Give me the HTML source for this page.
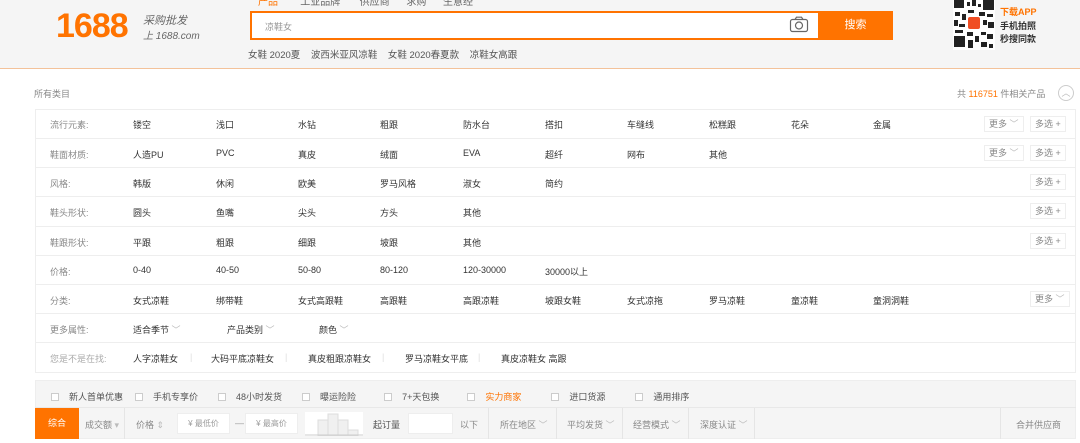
<!DOCTYPE html>
<html><head><meta charset="utf-8"><style>
*{margin:0;padding:0;box-sizing:border-box}
body{width:1080px;height:443px;overflow:hidden;background:#fff;font-family:"Liberation Sans","Noto Sans CJK SC",sans-serif;font-size:9px;color:#333;position:relative}
.a{position:absolute;white-space:nowrap}
.hdr{position:absolute;left:0;top:0;width:1080px;height:69px;background:#f5f5f5;border-bottom:1px solid #f3c29a}
.row{position:absolute;left:35px;width:1040px;height:29px;border-top:1px solid #eee}
.row span{position:absolute;top:9px}
.lab{color:#888}
.btn{position:absolute;height:16px;border:1px solid #eee;background:#fff;color:#888;font-size:9px;line-height:14px;padding:0 4px}
.gray{color:#888}
.cb{display:inline-block;width:8px;height:8px;border:1px solid #ccc;background:#fff;vertical-align:-1px;margin-right:10px}
</style></head><body>
<div class="hdr"></div>
<div class="a" style="left:56px;top:7px;font-size:34px;font-weight:bold;color:#ff7300;letter-spacing:-1px">1688</div>
<div class="a" style="left:143px;top:12px;font-size:11px;color:#666;font-style:italic">采购批发</div>
<div class="a" style="left:143px;top:27px;font-size:10px;color:#666;font-style:italic">上 1688.com</div>
<div class="a" style="left:258px;top:-7px;font-size:10px;color:#666"><span style="color:#ff7300">产品</span>&nbsp;&nbsp;&nbsp;&nbsp;&nbsp;&nbsp;&nbsp;&nbsp;工业品牌&nbsp;&nbsp;&nbsp;&nbsp;&nbsp;&nbsp;&nbsp;供应商&nbsp;&nbsp;&nbsp;&nbsp;&nbsp;&nbsp;求购&nbsp;&nbsp;&nbsp;&nbsp;&nbsp;&nbsp;生意经</div>
<div class="a" style="left:250px;top:11px;width:570px;height:29px;border:2px solid #ff7300;border-right:none;background:#fff"></div>
<div class="a" style="left:265px;top:20px;color:#999">凉鞋女</div>
<svg class="a" style="left:789px;top:16px" width="20" height="17" viewBox="0 0 20 17"><rect x="1.5" y="3.5" width="17" height="12" rx="2" fill="none" stroke="#666" stroke-width="1.2"/><path d="M6 3.5 L7.5 1.2 H12.5 L14 3.5" fill="none" stroke="#666" stroke-width="1.2"/><circle cx="10" cy="9.5" r="3.5" fill="none" stroke="#666" stroke-width="1.2"/></svg>
<div class="a" style="left:818px;top:11px;width:75px;height:29px;background:#ff7300;color:#fff;font-size:11px;text-align:center;line-height:29px">搜索</div>
<div class="a" style="left:248px;top:47px;font-size:9.5px;color:#555;word-spacing:0">女鞋 2020夏&nbsp;&nbsp;&nbsp;&nbsp;波西米亚风凉鞋&nbsp;&nbsp;&nbsp;&nbsp;女鞋 2020春夏款&nbsp;&nbsp;&nbsp;&nbsp;凉鞋女高跟</div>
<svg class="a" style="left:953px;top:0" width="42" height="50" viewBox="0 0 42 50"><rect width="42" height="50" fill="#fff"/><g fill="#222"><rect x="1" y="36" width="11" height="11"/><rect x="30" y="0" width="11" height="10"/><rect x="1" y="0" width="10" height="8"/>
<rect x="14" y="2" width="3" height="4"/><rect x="19" y="0" width="4" height="6"/><rect x="25" y="4" width="3" height="3"/><rect x="2" y="12" width="5" height="4"/><rect x="9" y="14" width="4" height="6"/><rect x="15" y="10" width="6" height="3"/><rect x="26" y="12" width="6" height="4"/><rect x="34" y="14" width="6" height="3"/><rect x="1" y="20" width="4" height="6"/><rect x="6" y="24" width="6" height="3"/><rect x="30" y="20" width="4" height="5"/><rect x="35" y="22" width="6" height="6"/><rect x="2" y="30" width="8" height="3"/><rect x="14" y="32" width="6" height="4"/><rect x="22" y="36" width="4" height="6"/><rect x="28" y="32" width="5" height="3"/><rect x="34" y="34" width="6" height="5"/><rect x="15" y="40" width="5" height="8"/><rect x="28" y="42" width="6" height="5"/><rect x="36" y="44" width="4" height="4"/></g><rect x="15" y="17" width="12" height="12" rx="2" fill="#f04e23"/></svg>
<div class="a" style="left:1000px;top:5px;font-size:9px;color:#ff7300;font-weight:bold">下载APP</div>
<div class="a" style="left:1000px;top:19px;font-size:9px;color:#333;font-weight:bold">手机拍照</div>
<div class="a" style="left:1000px;top:32px;font-size:9px;color:#333;font-weight:bold">秒搜同款</div>

<div class="a gray" style="left:34px;top:87px">所有类目</div>
<div class="a gray" style="left:957px;top:87px">共 <span style="color:#ff7300">116751</span> 件相关产品</div>
<div class="a" style="left:1058px;top:85px;width:16px;height:16px;border:1px solid #ccc;border-radius:50%;color:#bbb;font-size:9px;text-align:center;line-height:15px">︿</div>

<div class="a" style="left:35px;top:109px;width:1041px;height:264px;border:1px solid #eee"></div>
<div class="row" style="top:109px;border-top:none"><span class="lab" style="left:15px">流行元素:</span><span style="left:98px">镂空</span><span style="left:181px">浅口</span><span style="left:263px">水钻</span><span style="left:345px">粗跟</span><span style="left:428px">防水台</span><span style="left:510px">搭扣</span><span style="left:592px">车缝线</span><span style="left:674px">松糕跟</span><span style="left:756px">花朵</span><span style="left:838px">金属</span></div>
<div class="row" style="top:138px"><span class="lab" style="left:15px">鞋面材质:</span><span style="left:98px">人造PU</span><span style="left:181px">PVC</span><span style="left:263px">真皮</span><span style="left:345px">绒面</span><span style="left:428px">EVA</span><span style="left:510px">超纤</span><span style="left:592px">网布</span><span style="left:674px">其他</span></div>
<div class="row" style="top:167px"><span class="lab" style="left:15px">风格:</span><span style="left:98px">韩版</span><span style="left:181px">休闲</span><span style="left:263px">欧美</span><span style="left:345px">罗马风格</span><span style="left:428px">淑女</span><span style="left:510px">简约</span></div>
<div class="row" style="top:196px"><span class="lab" style="left:15px">鞋头形状:</span><span style="left:98px">圆头</span><span style="left:181px">鱼嘴</span><span style="left:263px">尖头</span><span style="left:345px">方头</span><span style="left:428px">其他</span></div>
<div class="row" style="top:226px"><span class="lab" style="left:15px">鞋跟形状:</span><span style="left:98px">平跟</span><span style="left:181px">粗跟</span><span style="left:263px">细跟</span><span style="left:345px">坡跟</span><span style="left:428px">其他</span></div>
<div class="row" style="top:255px"><span class="lab" style="left:15px">价格:</span><span style="left:98px">0-40</span><span style="left:181px">40-50</span><span style="left:263px">50-80</span><span style="left:345px">80-120</span><span style="left:428px">120-30000</span><span style="left:510px">30000以上</span></div>
<div class="row" style="top:284px"><span class="lab" style="left:15px">分类:</span><span style="left:98px">女式凉鞋</span><span style="left:181px">绑带鞋</span><span style="left:263px">女式高跟鞋</span><span style="left:345px">高跟鞋</span><span style="left:428px">高跟凉鞋</span><span style="left:510px">坡跟女鞋</span><span style="left:592px">女式凉拖</span><span style="left:674px">罗马凉鞋</span><span style="left:756px">童凉鞋</span><span style="left:838px">童洞洞鞋</span></div>
<div class="row" style="top:313px"><span class="lab" style="left:15px">更多属性:</span><span style="left:98px">适合季节 <span style="color:#bbb;position:static">﹀</span></span><span style="left:192px">产品类别 <span style="color:#bbb;position:static">﹀</span></span><span style="left:284px">颜色 <span style="color:#bbb;position:static">﹀</span></span></div>
<div class="row" style="top:342px"><span class="lab" style="left:15px;color:#aaa">您是不是在找:</span><span style="left:98px">人字凉鞋女</span><span style="left:176px">大码平底凉鞋女</span><span style="left:273px">真皮粗跟凉鞋女</span><span style="left:370px">罗马凉鞋女平底</span><span style="left:466px">真皮凉鞋女 高跟</span><span style="left:155px;color:#ddd">|</span><span style="left:250px;color:#ddd">|</span><span style="left:347px;color:#ddd">|</span><span style="left:443px;color:#ddd">|</span></div>

<div class="btn" style="left:984px;top:116px">更多 <span style="color:#bbb">﹀</span></div><div class="btn" style="left:1030px;top:116px">多选 +</div>
<div class="btn" style="left:984px;top:145px">更多 <span style="color:#bbb">﹀</span></div><div class="btn" style="left:1030px;top:145px">多选 +</div>
<div class="btn" style="left:1030px;top:174px">多选 +</div>
<div class="btn" style="left:1030px;top:203px">多选 +</div>
<div class="btn" style="left:1030px;top:233px">多选 +</div>
<div class="btn" style="left:1030px;top:291px">更多 <span style="color:#bbb">﹀</span></div>

<div class="a" style="left:35px;top:380px;width:1041px;height:59px;background:#f5f5f5;border:1px solid #eee"></div>
<div class="a" style="left:35px;top:407px;width:1041px;height:1px;background:#e8e8e8"></div>
<div class="a" style="left:51px;top:390px;color:#555"><span class="cb"></span>新人首单优惠<span style="display:inline-block;width:12px"></span><span class="cb"></span>手机专享价<span style="display:inline-block;width:20px"></span><span class="cb"></span>48小时发货<span style="display:inline-block;width:20px"></span><span class="cb"></span>曝运险险<span style="display:inline-block;width:28px"></span><span class="cb"></span>7+天包换<span style="display:inline-block;width:28px"></span><span class="cb"></span><span style="color:#ff7300">实力商家</span><span style="display:inline-block;width:30px"></span><span class="cb"></span>进口货源<span style="display:inline-block;width:30px"></span><span class="cb"></span>通用排序</div>
<div class="a" style="left:35px;top:408px;width:44px;height:31px;background:#ff7300;color:#fff;text-align:center;line-height:31px">综合</div>
<div class="a gray" style="left:85px;top:418px">成交额 <span style="color:#bbb">▾</span></div>
<div class="a" style="left:124px;top:408px;width:1px;height:31px;background:#e5e5e5"></div>
<div class="a gray" style="left:136px;top:418px">价格 <span style="color:#bbb">⇕</span></div>
<div class="a" style="left:177px;top:413px;width:53px;height:21px;background:#fff;border:1px solid #eee;color:#999;font-size:8px;line-height:19px;text-align:center">¥ 最低价</div>
<div class="a" style="left:235px;top:418px;color:#999">—</div>
<div class="a" style="left:245px;top:413px;width:53px;height:21px;background:#fff;border:1px solid #eee;color:#999;font-size:8px;line-height:19px;text-align:center">¥ 最高价</div>
<svg class="a" style="left:305px;top:412px" width="58" height="24"><rect x="0" y="0" width="58" height="24" fill="#fff"/><rect x="13" y="8" width="10" height="16" fill="#f0f0f0" stroke="#ddd"/><rect x="23" y="2" width="10" height="22" fill="#f0f0f0" stroke="#ddd"/><rect x="33" y="8" width="10" height="16" fill="#f0f0f0" stroke="#ddd"/><rect x="43" y="18" width="10" height="6" fill="#f0f0f0" stroke="#ddd"/><line x1="0" y1="23" x2="58" y2="23" stroke="#ccc"/></svg>
<div class="a" style="left:373px;top:418px;color:#555">起订量</div>
<div class="a" style="left:408px;top:413px;width:45px;height:21px;background:#fff;border:1px solid #eee"></div>
<div class="a gray" style="left:460px;top:418px">以下</div>
<div class="a" style="left:488px;top:408px;width:1px;height:31px;background:#e5e5e5"></div>
<div class="a gray" style="left:500px;top:418px">所在地区 <span style="color:#bbb">﹀</span></div>
<div class="a" style="left:556px;top:408px;width:1px;height:31px;background:#e5e5e5"></div>
<div class="a gray" style="left:567px;top:418px">平均发货 <span style="color:#bbb">﹀</span></div>
<div class="a" style="left:622px;top:408px;width:1px;height:31px;background:#e5e5e5"></div>
<div class="a gray" style="left:633px;top:418px">经营模式 <span style="color:#bbb">﹀</span></div>
<div class="a" style="left:688px;top:408px;width:1px;height:31px;background:#e5e5e5"></div>
<div class="a gray" style="left:700px;top:418px">深度认证 <span style="color:#bbb">﹀</span></div>
<div class="a" style="left:754px;top:408px;width:1px;height:31px;background:#e5e5e5"></div>
<div class="a" style="left:1000px;top:408px;width:1px;height:31px;background:#e5e5e5"></div>
<div class="a gray" style="left:1016px;top:418px">合并供应商</div>
</body></html>
